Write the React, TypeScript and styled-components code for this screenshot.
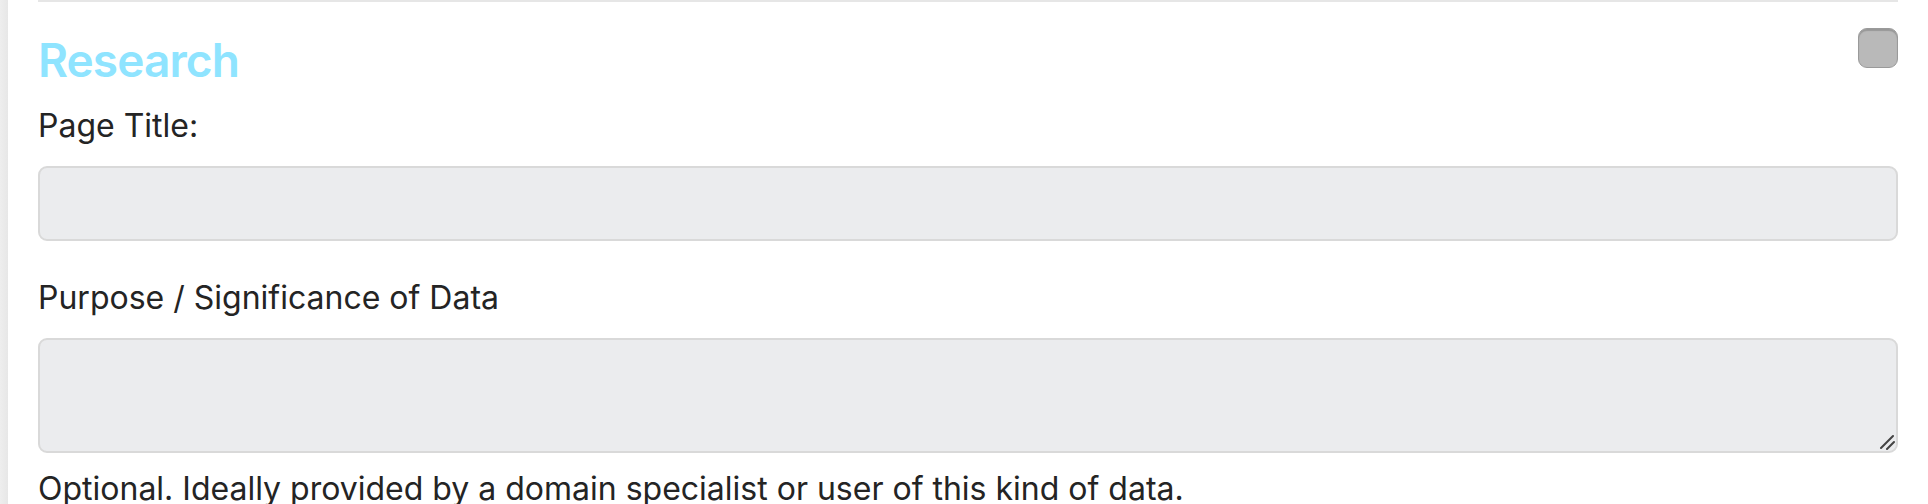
import styled, { createGlobalStyle } from 'styled-components';

const GlobalStyle = createGlobalStyle`
  html, body {
    margin: 0;
    padding: 0;
    background: #ffffff;
  }
  body {
    font-family: Inter, "Liberation Sans", sans-serif;
    color: #242424;
  }
`;

const Page = styled.div`
  display: flex;
  min-height: 504px;
`;

const SideStrip = styled.div`
  width: 8px;
  flex-shrink: 0;
  background: linear-gradient(to right, #eeeeee, #e7e7e7);
`;

const Content = styled.div`
  flex: 1;
  padding: 0 30px;
`;

const Section = styled.section`
  border-top: 2px solid #e6e6e6;
`;

const Header = styled.div`
  display: flex;
  justify-content: space-between;
  align-items: flex-start;
  margin-top: 30px;
`;

const Title = styled.h2`
  margin: 0;
  font-size: 46px;
  line-height: 56px;
  font-weight: 600;
  color: #8fe4ff;
  letter-spacing: -0.9px;
`;

const Toggle = styled.span`
  display: block;
  width: 40px;
  height: 40px;
  margin-top: -4px;
  box-sizing: border-box;
  border-radius: 9px;
  background: #b9b9b9;
  border: 1px solid #9a9a9a;
  box-shadow: inset 0 2px 1px rgba(0, 0, 0, 0.18);
`;

const Field = styled.div<{ $gap?: number }>`
  margin-top: ${(p) => p.$gap ?? 0}px;
`;

const Label = styled.label`
  display: block;
  font-size: 32px;
  line-height: 46px;
  margin-bottom: 17px;
`;

const TextInput = styled.input`
  display: block;
  width: 100%;
  height: 75px;
  box-sizing: border-box;
  border: 2px solid #d9d9d9;
  border-radius: 9px;
  background: #ebecee;
  font-family: inherit;
  font-size: 32px;
  padding: 0 16px;
  outline: none;
`;

const AreaWrap = styled.div`
  position: relative;
`;

const TextArea = styled.textarea`
  display: block;
  width: 100%;
  height: 115px;
  box-sizing: border-box;
  border: 2px solid #d9d9d9;
  border-radius: 9px;
  background: #ebecee;
  font-family: inherit;
  font-size: 32px;
  padding: 12px 16px;
  resize: none;
  outline: none;
`;

const Grip = styled.svg`
  position: absolute;
  right: 3px;
  bottom: 3px;
  width: 16px;
  height: 16px;
  pointer-events: none;
`;

const Help = styled.p`
  margin: 13px 0 0;
  font-size: 32px;
  line-height: 46px;
  color: #242424;
`;

export default function App() {
  return (
    <>
      <GlobalStyle />
      <Page>
        <SideStrip />
        <Content>
          <Section>
            <Header>
              <Title>Research</Title>
              <Toggle />
            </Header>
            <Field $gap={15}>
              <Label>Page Title:</Label>
              <TextInput type="text" />
            </Field>
            <Field $gap={34}>
              <Label>Purpose / Significance of Data</Label>
              <AreaWrap>
                <TextArea />
                <Grip viewBox="0 0 16 16">
                  <path d="M2 14 L14 2 M8 15 L15 8" stroke="#444" strokeWidth="2" strokeLinecap="round" />
                </Grip>
              </AreaWrap>
              <Help>Optional. Ideally provided by a domain specialist or user of this kind of data.</Help>
            </Field>
          </Section>
        </Content>
      </Page>
    </>
  );
}
